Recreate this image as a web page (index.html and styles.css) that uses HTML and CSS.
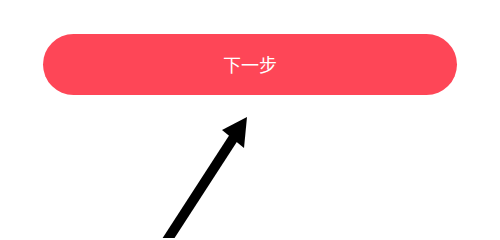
FILE: index.html
```html
<!DOCTYPE html>
<html lang="zh">
<head>
<meta charset="utf-8">
<link rel="stylesheet" href="styles.css">
</head>
<body>
<div class="page">
  <button class="next-btn">下一步</button>
  <svg class="annot-arrow" width="500" height="238" viewBox="0 0 500 238">
    <line x1="166" y1="242" x2="236" y2="134" stroke="#000" stroke-width="10"/>
    <polygon points="247,117 222,130 244,148" fill="#000"/>
  </svg>
</div>
</body>
</html>
```
FILE: styles.css
```css
html, body {
  margin: 0;
  padding: 0;
  background: #fff;
}
.page {
  position: relative;
  width: 500px;
  height: 238px;
  overflow: hidden;
  padding-top: 34px;
  box-sizing: border-box;
}
.next-btn {
  display: block;
  margin: 0 0 0 43px;
  width: 414px;
  height: 61px;
  border: none;
  border-radius: 31px;
  background: #fe4657;
  color: #fff;
  font-family: "Noto Sans CJK SC", "Noto Sans", sans-serif;
  font-size: 18px;
  padding: 0;
  padding-bottom: 2px;
}
.annot-arrow {
  position: absolute;
  left: 0;
  top: 0;
}
```
